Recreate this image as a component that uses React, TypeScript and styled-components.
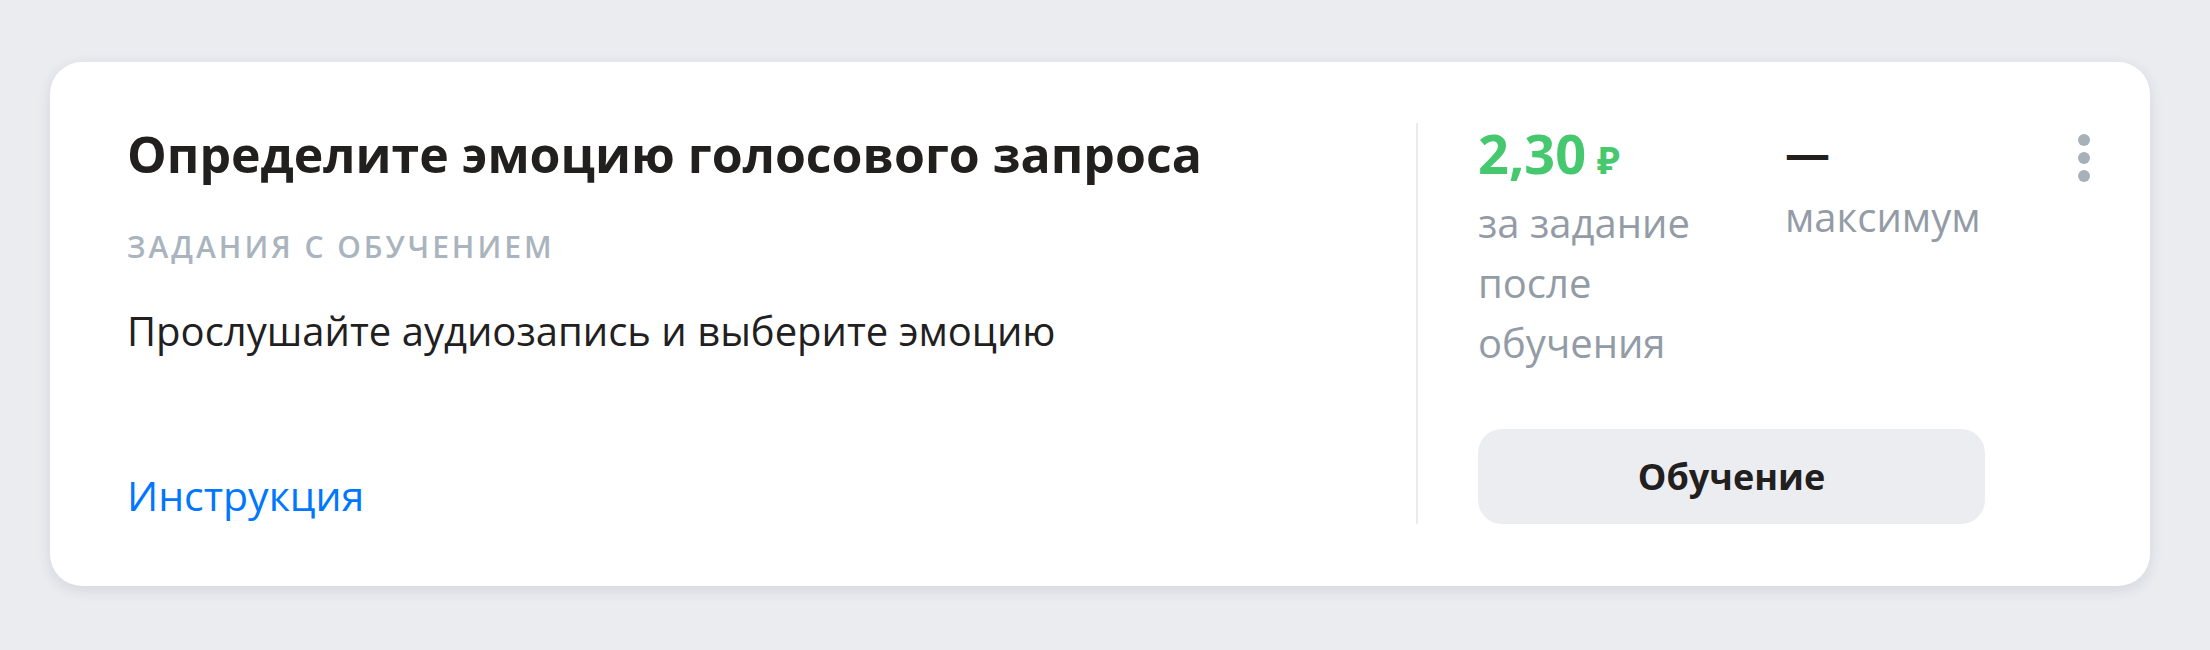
import React from 'react';
import styled, { createGlobalStyle } from 'styled-components';

const colors = {
    page: '#ebecf0',
    text: '#21201f',
    grey: '#939ca6',
    lightGrey: '#aab4be',
    green: '#46c86e',
    blue: '#0077ff',
    divider: '#ebebeb',
    button: '#ecedf1',
};

const GlobalStyle = createGlobalStyle`
    body {
        margin: 0;
        background: ${colors.page};
        font-family: 'Open Sans', 'Noto Sans', 'DejaVu Sans', sans-serif;
        color: ${colors.text};
    }
`;

const Page = styled.div`
    padding: 62px 60px 64px 50px;
`;

const Card = styled.div`
    display: flex;
    background: #fff;
    border-radius: 32px;
    box-shadow: 0 4px 14px rgba(40, 50, 90, 0.12);
    padding: 61px 60px 62px 77px;
    min-height: 401px;
`;

const Info = styled.div`
    flex: 1;
    display: flex;
    flex-direction: column;
`;

const Title = styled.div`
    font-size: 50px;
    font-weight: 700;
    line-height: 62px;
`;

const Kind = styled.div`
    margin-top: 44px;
    font-size: 30px;
    font-weight: 600;
    line-height: 36px;
    letter-spacing: 3px;
    text-transform: uppercase;
    color: ${colors.lightGrey};
`;

const Description = styled.div`
    margin-top: 41px;
    font-size: 40px;
    line-height: 50px;
`;

const Link = styled.a`
    margin-top: auto;
    align-self: flex-start;
    font-size: 41px;
    line-height: 58px;
    color: ${colors.blue};
    text-decoration: none;
`;

const Divider = styled.div`
    width: 2px;
    background: ${colors.divider};
    margin-right: 60px;
`;

const Side = styled.div`
    width: 612px;
    display: flex;
    flex-direction: column;
`;

const Stats = styled.div`
    display: flex;
    align-items: flex-start;
`;

const Stat = styled.div<{ $width?: number }>`
    width: ${(p) => (p.$width ? `${p.$width}px` : 'auto')};
    flex: ${(p) => (p.$width ? 'none' : '1')};
`;

const Value = styled.div<{ $green?: boolean; $size?: number }>`
    font-size: ${(p) => p.$size ?? 54}px;
    font-weight: 700;
    line-height: 60px;
    color: ${(p) => (p.$green ? colors.green : colors.text)};
`;

const Currency = styled.span`
    font-size: 38px;
    margin-left: 11px;
`;

const Caption = styled.div`
    margin-top: 4px;
    width: 250px;
    font-size: 40px;
    line-height: 60px;
    color: ${colors.grey};
`;

const Dots = styled.button`
    display: flex;
    flex-direction: column;
    gap: 6px;
    margin-top: 11px;
    padding: 0;
    border: none;
    background: none;
    cursor: pointer;
`;

const Dot = styled.span`
    width: 12px;
    height: 12px;
    border-radius: 50%;
    background: #a7b1ba;
`;

const Button = styled.button`
    margin-top: auto;
    width: 507px;
    height: 95px;
    border: none;
    border-radius: 24px;
    background: ${colors.button};
    font-family: inherit;
    font-size: 36px;
    font-weight: 700;
    color: ${colors.text};
    cursor: pointer;
`;

export default function App() {
    return (
        <>
            <GlobalStyle />
            <Page>
                <Card>
                    <Info>
                        <Title>Определите эмоцию голосового запроса</Title>
                        <Kind>Задания с обучением</Kind>
                        <Description>Прослушайте аудиозапись и выберите эмоцию</Description>
                        <Link href="#">Инструкция</Link>
                    </Info>
                    <Divider />
                    <Side>
                        <Stats>
                            <Stat $width={307}>
                                <Value $green>
                                    2,30<Currency>₽</Currency>
                                </Value>
                                <Caption>за задание после обучения</Caption>
                            </Stat>
                            <Stat>
                                <Value $size={45}>—</Value>
                                <Caption>максимум</Caption>
                            </Stat>
                            <Dots aria-label="Ещё">
                                <Dot />
                                <Dot />
                                <Dot />
                            </Dots>
                        </Stats>
                        <Button>Обучение</Button>
                    </Side>
                </Card>
            </Page>
        </>
    );
}
